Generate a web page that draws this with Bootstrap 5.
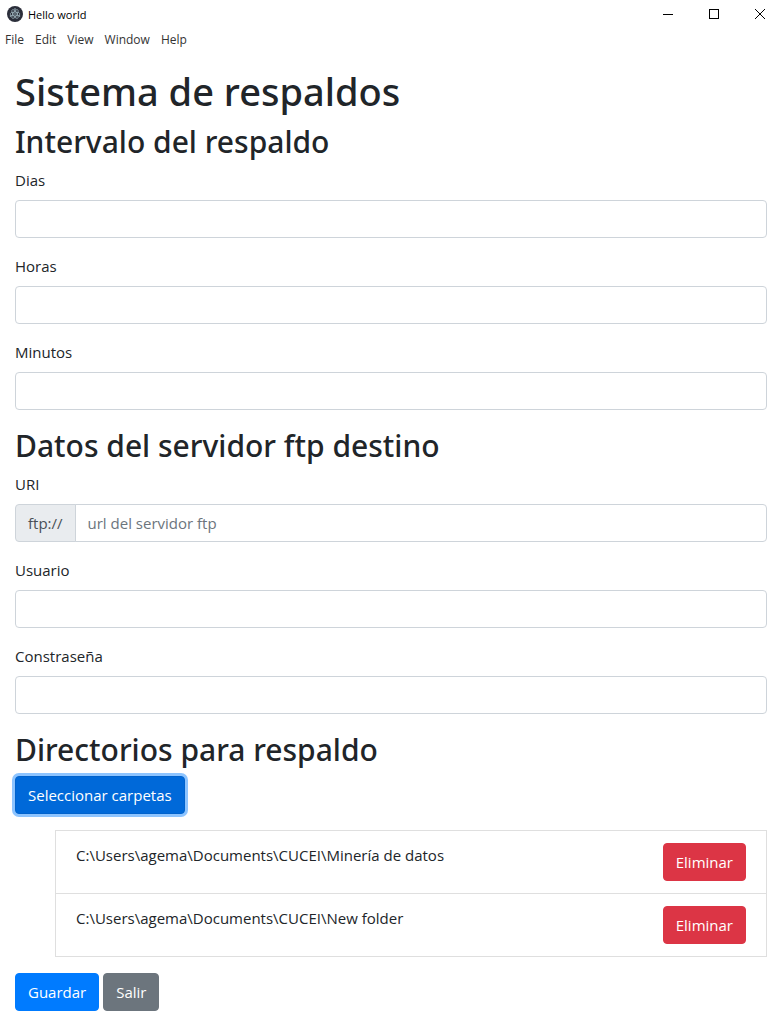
<!DOCTYPE html>
<html lang="es">
<head>
<meta charset="utf-8">
<meta name="viewport" content="width=device-width, initial-scale=1">
<title>Hello world</title>
<link href="https://cdn.jsdelivr.net/npm/bootstrap@5.3.0/dist/css/bootstrap.min.css" rel="stylesheet">
<style>
  body { font-family: "Open Sans", "Noto Sans", sans-serif; font-size: 15px; line-height: 24px; color: #212529; background: #fff; }
  .titlebar { height: 28px; padding-left: 7px; gap: 5px; font-size: 12px; line-height: 16px; color: #000; }
  .titlebar-text { font-size: 11px; padding-top: 1px; }
  .window-btn { width: 46px; height: 28px; padding: 0; border: 0; background: transparent; color: #000; }
  .window-btn svg { display: block; margin: 0 auto; }
  .menubar { padding: 4px 5px; gap: 11px; font-size: 12px; line-height: 16px; }
  .menubar a { color: #333; text-decoration: none; }
  .page { padding: 15px 16px 24px 15px; }
  h1, h2 { font-family: "Noto Sans", "Open Sans", sans-serif; font-weight: 500; }
  h1 { margin-bottom: 7px; font-size: 38px; line-height: 48px; }
  h2 { margin-bottom: 6px; font-size: 30px; line-height: 40px; }
  .form-label { display: block; margin-bottom: 8px; }
  .form-control, .input-group-text { height: 38px; padding: 6px 12px; font-size: 15px; line-height: 24px; border-color: #ced4da; border-radius: 4px; }
  .form-control::placeholder { color: #6c757d; }
  .input-group-text { color: #495057; background: #e9ecef; }
  .btn { height: 38px; padding: 6px 12px; font-size: 15px; line-height: 24px; border-radius: 4px; }
  .btn-primary { --bs-btn-bg: #007bff; --bs-btn-border-color: #007bff; }
  .btn-pick { --bs-btn-bg: #0069d9; --bs-btn-border-color: #0062cc; box-shadow: 0 0 0 3px #8dc4ff; }
  .folders { margin-left: 40px; }
  .folders .list-group-item { padding: 12px 20px; border-color: #dfdfdf; border-radius: 0; color: #212529; }
</style>
</head>
<body>
<header>
  <div class="titlebar d-flex align-items-center">
    <svg width="16" height="16" viewBox="0 0 32 32" aria-hidden="true">
      <circle cx="16" cy="16" r="16" fill="#2b2e3a"/>
      <g fill="none" stroke="#b4cdd6" stroke-opacity=".8" stroke-width="1.5">
        <ellipse cx="16" cy="16" rx="10" ry="4"/>
        <ellipse cx="16" cy="16" rx="10" ry="4" transform="rotate(60 16 16)"/>
        <ellipse cx="16" cy="16" rx="10" ry="4" transform="rotate(120 16 16)"/>
      </g>
      <g fill="#b4cdd6"><circle cx="16" cy="16" r="1.4"/><circle cx="7" cy="20" r="1.5"/><circle cx="25" cy="20" r="1.5"/><circle cx="16" cy="6" r="1.5"/></g>
    </svg>
    <span class="titlebar-text">Hello world</span>
    <div class="d-flex ms-auto">
      <button type="button" class="window-btn" aria-label="Minimizar"><svg width="10" height="10" shape-rendering="crispEdges"><path d="M0 5.500h10" stroke="#000"/></svg></button>
      <button type="button" class="window-btn" aria-label="Maximizar"><svg width="11" height="10" viewBox="0 0 11 10" shape-rendering="crispEdges"><path d="M.5.5h9v9h-9z" fill="none" stroke="#000"/></svg></button>
      <button type="button" class="window-btn" aria-label="Cerrar"><svg width="10" height="10"><path d="M0 0l10 10M10 0L0 10" stroke="#000"/></svg></button>
    </div>
  </div>
  <nav class="menubar d-flex">
    <a href="#">File</a><a href="#">Edit</a><a href="#">View</a><a href="#">Window</a><a href="#">Help</a>
  </nav>
</header>
<main class="page">
  <h1>Sistema de respaldos</h1>
  <form>
    <h2>Intervalo del respaldo</h2>
    <div class="mb-3"><label class="form-label" for="dias">Dias</label><input type="text" class="form-control" id="dias"></div>
    <div class="mb-3"><label class="form-label" for="horas">Horas</label><input type="text" class="form-control" id="horas"></div>
    <div class="mb-3"><label class="form-label" for="minutos">Minutos</label><input type="text" class="form-control" id="minutos"></div>
    <h2>Datos del servidor ftp destino</h2>
    <div class="mb-3">
      <label class="form-label" for="uri">URI</label>
      <div class="input-group"><span class="input-group-text">ftp://</span><input type="text" class="form-control" id="uri" placeholder="url del servidor ftp"></div>
    </div>
    <div class="mb-3"><label class="form-label" for="usuario">Usuario</label><input type="text" class="form-control" id="usuario"></div>
    <div class="mb-3"><label class="form-label" for="clave">Constraseña</label><input type="password" class="form-control" id="clave"></div>
    <h2>Directorios para respaldo</h2>
    <button type="button" class="btn btn-primary btn-pick">Seleccionar carpetas</button>
    <ul class="list-group folders my-3">
      <li class="list-group-item d-flex justify-content-between align-items-start"><span>C:\Users\agema\Documents\CUCEI\Minería de datos</span><button type="button" class="btn btn-danger">Eliminar</button></li>
      <li class="list-group-item d-flex justify-content-between align-items-start"><span>C:\Users\agema\Documents\CUCEI\New folder</span><button type="button" class="btn btn-danger">Eliminar</button></li>
    </ul>
    <div class="d-flex gap-1">
      <button type="submit" class="btn btn-primary">Guardar</button>
      <button type="button" class="btn btn-secondary">Salir</button>
    </div>
  </form>
</main>
<script src="https://cdn.jsdelivr.net/npm/bootstrap@5.3.0/dist/js/bootstrap.bundle.min.js"></script>
</body>
</html>
